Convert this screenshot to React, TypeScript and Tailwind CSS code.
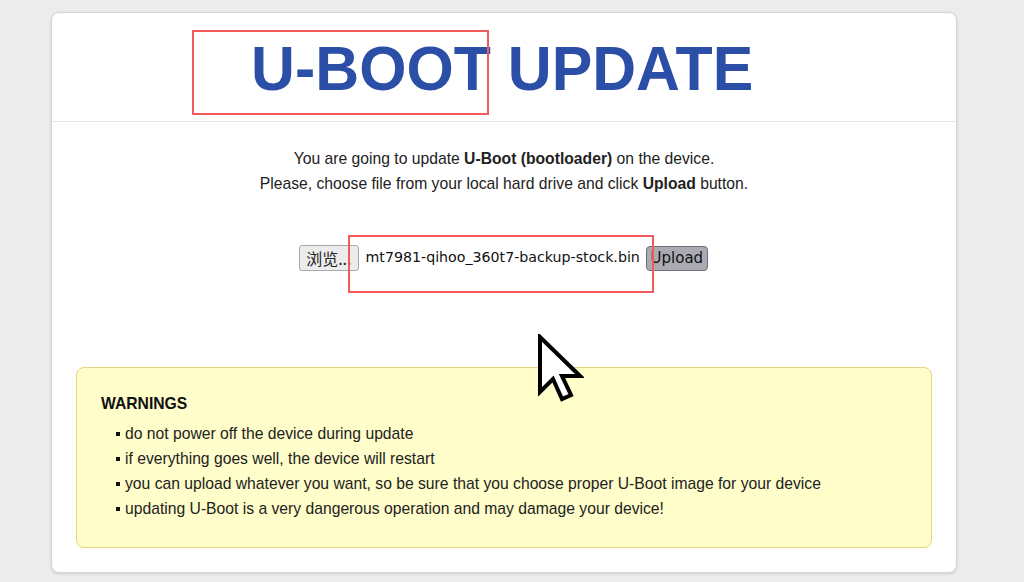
import React from 'react'

const warnings = [
  'do not power off the device during update',
  'if everything goes well, the device will restart',
  'you can upload whatever you want, so be sure that you choose proper U-Boot image for your device',
  'updating U-Boot is a very dangerous operation and may damage your device!',
]

function Cursor() {
  return (
    <svg width="48" height="68" viewBox="0 0 48 68" className="absolute left-[484px] top-[321px]">
      <path
        d="M4 3 L4 58 L17 45 L26 65 L35 61 L26 42 L44 42 Z"
        fill="#ffffff"
        stroke="#000000"
        strokeWidth="4"
        strokeLinejoin="miter"
      />
    </svg>
  )
}

export default function App() {
  return (
    <div className="min-h-[582px] w-[1024px] bg-[#ececec] pt-[12px]" style={{ fontFamily: '"Liberation Sans", Arial, sans-serif' }}>
      <div className="relative ml-[51px] w-[906px] h-[561px] bg-white rounded-[8px] border border-[#d6d6d6] shadow-[0_1px_3px_rgba(0,0,0,0.12)] flex flex-col">
        <div className="h-[109px] border-b border-[#e6e6e6] flex items-center justify-center">
          <h1 className="text-[63px] font-bold text-[#2b4fa6] leading-none mt-[2px] ml-[-4px] scale-x-[0.965] whitespace-nowrap">
            U-BOOT UPDATE
          </h1>
        </div>

        <div className="mt-[24px] text-center text-[15.7px] leading-[25px] text-[#222]">
          <p>
            You are going to update <b>U-Boot (bootloader)</b> on the device.
          </p>
          <p>
            Please, choose file from your local hard drive and click <b>Upload</b> button.
          </p>
        </div>

        <div className="mt-[49px] flex items-center justify-center ml-[-1px] h-[26px]">
          <span
            className="h-[26px] px-[6px] flex items-center bg-[#ececec] border border-[#a9a9a9] rounded-[3px] text-[16px] text-[#222]"
            style={{ fontFamily: '"Noto Sans CJK SC", "DejaVu Sans", sans-serif' }}
          >
            浏览...
          </span>
          <span
            className="ml-[7px] text-[14.2px] text-[#111]"
            style={{ fontFamily: '"DejaVu Sans", Verdana, sans-serif' }}
          >
            mt7981-qihoo_360t7-backup-stock.bin
          </span>
          <span
            className="ml-[6px] h-[25px] w-[62px] flex items-center justify-center bg-[#aaaab2] border border-[#6e6e74] rounded-[4px] text-[15px] text-[#111]"
            style={{ fontFamily: '"DejaVu Sans", Verdana, sans-serif' }}
          >
            Upload
          </span>
        </div>

        <div className="mt-auto mb-[24px] mx-[24px] h-[181px] bg-[#fffdc9] border border-[#e4d47e] rounded-[8px] pl-[24px] pt-[23px] text-[15.7px] leading-[25px] text-[#222]">
          <div className="font-bold text-[#111]">WARNINGS</div>
          <ul className="mt-[5px]">
            {warnings.map((w) => (
              <li key={w} className="flex items-center">
                <span className="ml-[15px] mr-[5px] w-[4px] h-[4px] bg-[#111]" />
                <span>{w}</span>
              </li>
            ))}
          </ul>
        </div>

        <div className="absolute left-[140px] top-[17px] w-[297px] h-[85px] border-2 border-[#f25a5a]" />
        <div className="absolute left-[296px] top-[222px] w-[306px] h-[58px] border-2 border-[#f25a5a]" />
        <Cursor />
      </div>
    </div>
  )
}
